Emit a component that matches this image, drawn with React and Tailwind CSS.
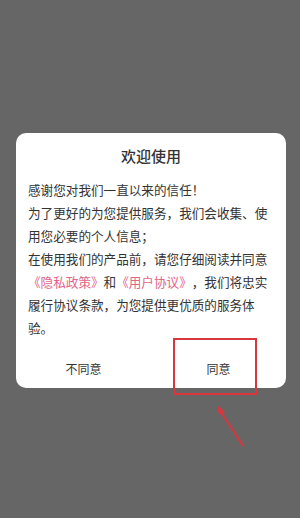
export default function App() {
  return (
    <div
      className="relative h-[518px] w-[300px] overflow-hidden bg-[#666666] pt-[133px]"
      style={{ fontFamily: '"Noto Sans CJK SC", "Noto Sans", sans-serif' }}
    >
      <div className="ml-4 w-[270px] rounded-[10px] bg-white">
        <h1 className="pt-[13px] text-center text-[15px] font-medium leading-[20px] text-[#333333]">
          欢迎使用
        </h1>
        <div className="mt-[12px] px-3 text-[12.6px] leading-[23px] text-[#333333] [text-spacing-trim:space-all]">
          <p>感谢您对我们一直以来的信任！</p>
          <p>为了更好的为您提供服务，我们会收集、使用您必要的个人信息；</p>
          <p>
            在使用我们的产品前，请您仔细阅读并同意
            <span className="text-[#e2648a]">《隐私政策》</span>和
            <span className="text-[#e2648a]">《用户协议》</span>
            ，我们将忠实履行协议条款，为您提供更优质的服务体验。
          </p>
        </div>
        <div className="mt-[11px] flex h-[38px] text-[12px] text-[#333333]">
          <button className="flex flex-1 items-center justify-center">不同意</button>
          <button className="flex flex-1 items-center justify-center">同意</button>
        </div>
      </div>

      {/* annotation */}
      <div className="absolute left-[173px] top-[338px] h-[57px] w-[84px] border-2 border-[#d9363e]" />
      <svg
        className="absolute left-[210px] top-[400px]"
        width="40"
        height="50"
        viewBox="0 0 40 50"
      >
        <line x1="9" y1="9" x2="33" y2="46" stroke="#d9363e" strokeWidth="2" />
        <polygon points="7,5 15,12 9,15" fill="#d9363e" />
      </svg>
    </div>
  );
}
